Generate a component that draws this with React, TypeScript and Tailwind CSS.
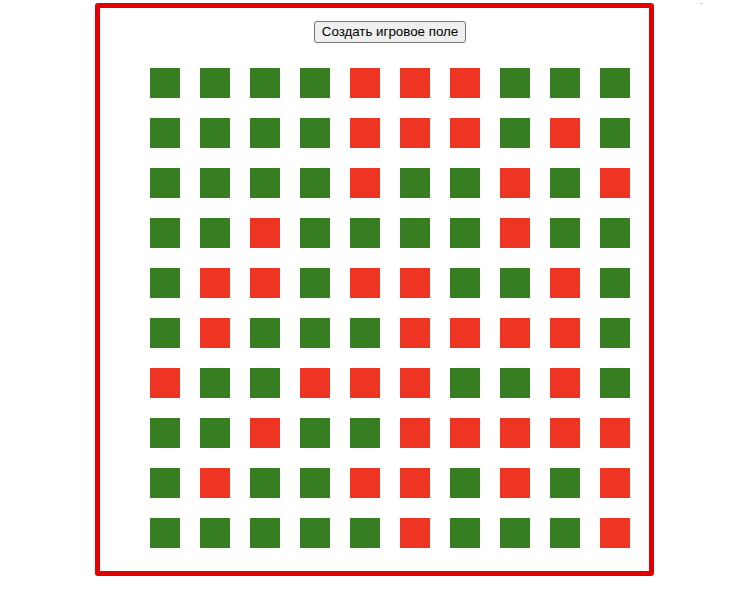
const field = [
  "GGGGRRRGGG",
  "GGGGRRRGRG",
  "GGGGRGGRGR",
  "GGRGGGGRGG",
  "GRRGRRGGRG",
  "GRGGGRRRRG",
  "RGGRRRGGRG",
  "GGRGGRRRRR",
  "GRGGRRGRGR",
  "GGGGGRGGGR",
];

export default function App() {
  return (
    <div className="flex items-start min-h-[594px] bg-white pt-[3px] pl-[95px] font-['Liberation_Sans',Arial,sans-serif]">
      <div className="w-[559px] h-[573px] border-[5px] border-[#e30000] rounded-[3px] flex flex-col items-center pl-[31px]">
        <button className="mt-[13px] px-[7px] py-[2px] text-[13.33px] leading-[16px] text-black bg-[#efefef] border border-[#767676] rounded-[3px]">
          Создать игровое поле
        </button>
        <div className="mt-[25px] grid grid-cols-[repeat(10,30px)] gap-5">
          {field.flatMap((row, r) =>
            row.split("").map((c, i) => (
              <div
                key={r + "-" + i}
                className={c === "G" ? "w-[30px] h-[30px] bg-[#377e22]" : "w-[30px] h-[30px] bg-[#ee3524]"}
              />
            ))
          )}
        </div>
      </div>
      <div className="ml-[46px] w-[3px] h-px bg-[#cfcfcf]" />
    </div>
  );
}
